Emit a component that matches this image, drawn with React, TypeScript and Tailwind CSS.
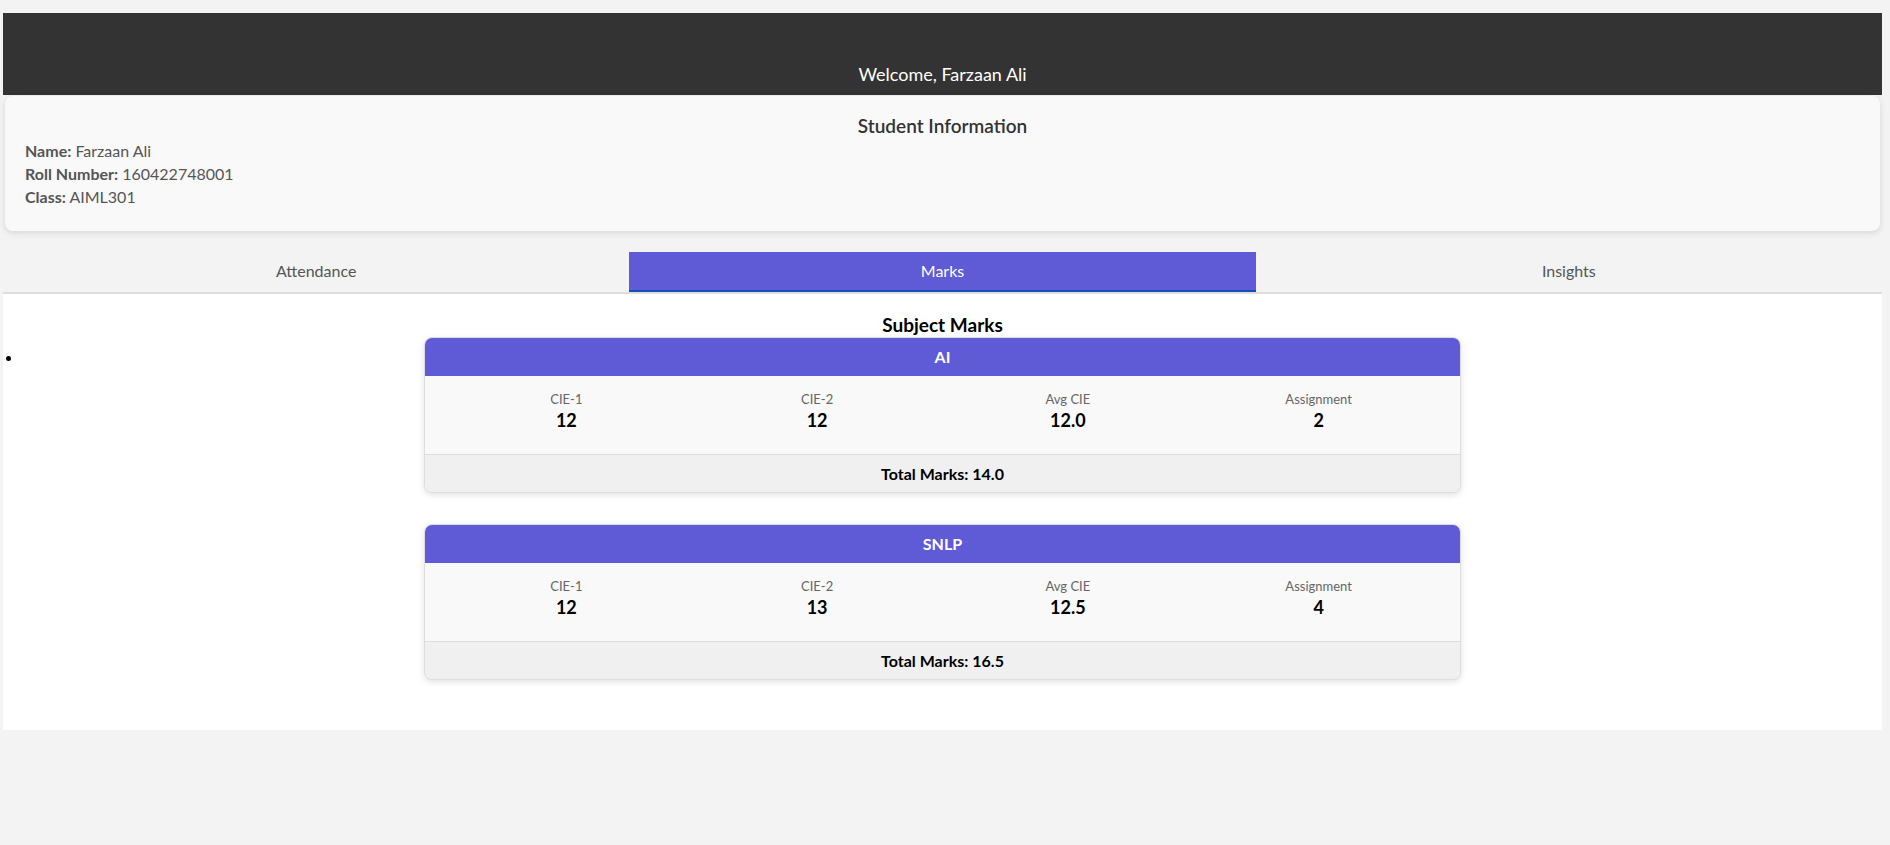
import { useState } from 'react';

type SubjectMarks = {
  subject: string;
  cie1: number;
  cie2: number;
  assignment: number;
};

const student = {
  name: 'Farzaan Ali',
  rollNumber: '160422748001',
  className: 'AIML301',
};

const marks: SubjectMarks[] = [
  { subject: 'AI', cie1: 12, cie2: 12, assignment: 2 },
  { subject: 'SNLP', cie1: 12, cie2: 13, assignment: 4 },
];

const TABS = ['Attendance', 'Marks', 'Insights'] as const;
type Tab = (typeof TABS)[number];

function MarksCard({ item }: { item: SubjectMarks }) {
  const avg = (item.cie1 + item.cie2) / 2;
  const total = avg + item.assignment;
  const cells = [
    { label: 'CIE-1', value: String(item.cie1) },
    { label: 'CIE-2', value: String(item.cie2) },
    { label: 'Avg CIE', value: avg.toFixed(1) },
    { label: 'Assignment', value: String(item.assignment) },
  ];

  return (
    <div className="w-[1037px] mx-auto bg-[#f9f9f9] border border-[#dddddd] rounded-lg overflow-hidden shadow-[0_2px_6px_rgba(0,0,0,0.12)]">
      <div className="h-[38px] bg-[#5f5ad6] text-white font-bold text-[16px] leading-[38px] text-center">
        {item.subject}
      </div>
      <div className="grid grid-cols-4 px-4 pt-[15px] pb-[20px] text-center">
        {cells.map((c) => (
          <div key={c.label}>
            <div className="text-[13px] leading-[16px] text-[#666666]">{c.label}</div>
            <div className="text-[18px] leading-[27px] font-bold text-black">{c.value}</div>
          </div>
        ))}
      </div>
      <div className="border-t border-[#dddddd] bg-[#f0f0f0] h-[38px] leading-[38px] text-center text-[16px] font-bold text-black">
        Total Marks: {total.toFixed(1)}
      </div>
    </div>
  );
}

export default function App() {
  const [tab, setTab] = useState<Tab>('Marks');

  return (
    <div
      className="min-h-screen bg-[#f3f3f3] pt-[13px] pl-[3px] pr-[8px]"
      style={{ fontFamily: 'Lato, "Open Sans", sans-serif' }}
    >
      {/* Top bar */}
      <header className="h-[82px] bg-[#333333] flex items-end justify-center pb-[9px]">
        <h1 className="text-white text-[18px] leading-[24px]">Welcome, {student.name}</h1>
      </header>

      {/* Student info */}
      <section className="mx-[2px] mt-px bg-[#f9f9f9] rounded-lg shadow-[0_2px_6px_rgba(0,0,0,0.12)] px-[20px] pt-[17px] pb-[23px] text-[#555555]">
        <h2 className="text-center text-[19px] leading-[26px] font-semibold text-[#333333]">
          Student Information
        </h2>
        <p className="text-[16px] leading-[23px]">
          <span className="font-bold">Name:</span> {student.name}
        </p>
        <p className="text-[16px] leading-[23px]">
          <span className="font-bold">Roll Number:</span> {student.rollNumber}
        </p>
        <p className="text-[16px] leading-[23px]">
          <span className="font-bold">Class:</span> {student.className}
        </p>
      </section>

      {/* Tabs */}
      <nav className="mt-[21px] flex border-b-2 border-[#dddddd]">
        {TABS.map((t) => (
          <button
            key={t}
            onClick={() => setTab(t)}
            className={
              t === tab
                ? 'flex-1 h-[40px] bg-[#5f5ad6] text-white text-[16px] border-b-2 border-[#1150b8]'
                : 'flex-1 h-[40px] text-[#555555] text-[16px] border-b-2 border-transparent'
            }
          >
            {t}
          </button>
        ))}
      </nav>

      {/* Marks */}
      <main className="bg-white px-5 pt-[19px] pb-[50px]">
        <h3 className="text-center text-[19px] leading-[24px] font-bold text-black">Subject Marks</h3>
        <ul className="list-disc">
          {marks.slice(0, 1).map((m) => (
            <li key={m.subject}>
              <MarksCard item={m} />
            </li>
          ))}
        </ul>
        {marks.slice(1).map((m) => (
          <div key={m.subject} className="mt-[31px]">
            <MarksCard item={m} />
          </div>
        ))}
      </main>
    </div>
  );
}
